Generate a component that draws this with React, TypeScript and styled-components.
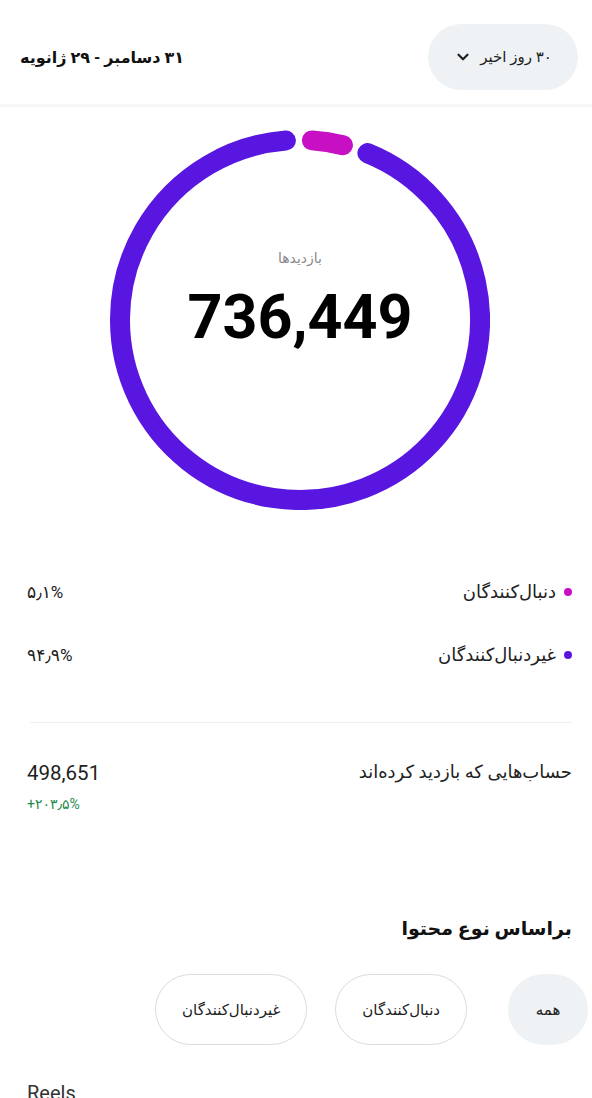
import styled, { createGlobalStyle } from "styled-components";
import { ChevronDown } from "lucide-react";

const GlobalStyle = createGlobalStyle`
  html, body {
    margin: 0;
    padding: 0;
    background: #ffffff;
  }
  body {
    direction: rtl;
    font-family: Roboto, "DejaVu Sans", sans-serif;
    color: #1c1c1c;
  }
  * {
    box-sizing: border-box;
  }
`;

const PURPLE = "#5816e0";
const PINK = "#c70fc4";

const Page = styled.div`
  width: 592px;
  height: 1098px;
  overflow: hidden;
`;

const Header = styled.header`
  height: 107px;
  border-bottom: 3px solid #f6f6f6;
  display: flex;
  align-items: center;
  justify-content: space-between;
  padding: 10px 14px 0 20px;
`;

const RangeButton = styled.button`
  height: 66px;
  width: 150px;
  border: none;
  border-radius: 33px;
  background: #eff2f5;
  display: flex;
  align-items: center;
  justify-content: center;
  gap: 8px;
  font-family: inherit;
  font-size: 15px;
  color: #222;
  direction: rtl;
`;

const DateLabel = styled.div`
  font-size: 16px;
  font-weight: bold;
  color: #111;
`;

const DonutWrap = styled.section`
  display: flex;
  justify-content: center;
  padding: 23px 0 0 8px;
`;

const DonutStack = styled.div`
  display: grid;
  width: 380px;
  height: 380px;
  & > * {
    grid-area: 1 / 1;
  }
`;

const DonutCenter = styled.div`
  display: flex;
  flex-direction: column;
  align-items: center;
  padding-top: 116px;
`;

const CenterCaption = styled.div`
  font-size: 14px;
  color: #8a8a8a;
  line-height: 24px;
`;

const CenterValue = styled.div`
  font-family: Roboto, "Liberation Sans", sans-serif;
  font-size: 61px;
  font-weight: bold;
  color: #000;
  line-height: 70px;
  margin-top: 12px;
  direction: ltr;
`;

const Legend = styled.section`
  margin-top: 50px;
  padding: 0 20px 0 27px;
`;

const LegendRow = styled.div`
  height: 63px;
  display: flex;
  align-items: center;
  justify-content: space-between;
`;

const LegendLabel = styled.div`
  display: flex;
  align-items: center;
  gap: 8px;
  font-size: 18px;
  color: #222;
`;

const Dot = styled.span<{ $color: string }>`
  width: 8px;
  height: 8px;
  border-radius: 50%;
  background: ${(p) => p.$color};
`;

const Percent = styled.div`
  font-size: 17px;
  color: #222;
`;

const Divider = styled.hr`
  margin: 36px 20px 0 30px;
  border: none;
  border-top: 1px solid #eeeeee;
`;

const StatRow = styled.section`
  margin-top: 37px;
  padding: 0 20px 0 27px;
  display: flex;
  justify-content: space-between;
  align-items: flex-start;
`;

const StatLabel = styled.div`
  font-size: 18px;
  line-height: 24px;
  color: #222;
`;

const StatValues = styled.div`
  display: flex;
  flex-direction: column;
  align-items: flex-start;
  direction: ltr;
`;

const StatNumber = styled.div`
  font-family: Roboto, sans-serif;
  font-size: 20.5px;
  line-height: 26px;
  color: #222;
`;

const StatChange = styled.div`
  margin-top: 8px;
  font-size: 14px;
  line-height: 20px;
  color: #1e8a4c;
`;

const SectionTitle = styled.h2`
  margin: 100px 20px 0 0;
  font-size: 19px;
  line-height: 30px;
  font-weight: bold;
  color: #111;
`;

const ChipRow = styled.div`
  margin-top: 30px;
  padding-right: 4px;
  display: flex;
  gap: 28px;
`;

const Chip = styled.button<{ $active?: boolean }>`
  height: 71px;
  padding: 0 ${(p) => (p.$active ? "24px" : "26px")};
  min-width: ${(p) => (p.$active ? "80px" : "auto")};
  margin-left: ${(p) => (p.$active ? "13px" : "0")};
  border-radius: 36px;
  border: ${(p) => (p.$active ? "none" : "1.5px solid #dcdcdc")};
  background: ${(p) => (p.$active ? "#eff2f5" : "#fff")};
  font-family: inherit;
  font-size: 15px;
  color: #222;
  direction: rtl;
`;

const ReelsTitle = styled.div`
  margin-top: 36px;
  padding-left: 27px;
  direction: ltr;
  text-align: left;
  font-family: Roboto, sans-serif;
  font-size: 20px;
  color: #333;
`;

const CX = 190;
const CY = 190;
const R = 180;

const point = (deg: number) => {
  const a = (deg * Math.PI) / 180;
  return [CX + R * Math.sin(a), CY - R * Math.cos(a)];
};

const arc = (from: number, to: number) => {
  const [x1, y1] = point(from);
  const [x2, y2] = point(to);
  const large = to - from > 180 ? 1 : 0;
  return `M ${x1} ${y1} A ${R} ${R} 0 ${large} 1 ${x2} ${y2}`;
};

const Donut = () => (
  <svg width="380" height="380" viewBox="0 0 380 380">
    <path d={arc(22, 355.5)} fill="none" stroke={PURPLE} strokeWidth="20" strokeLinecap="round" />
    <path d={arc(3.8, 13.8)} fill="none" stroke={PINK} strokeWidth="20" strokeLinecap="round" />
  </svg>
);

const legend = [
  { label: "دنبال‌کنندگان", value: "۵٫۱%", color: PINK },
  { label: "غیردنبال‌کنندگان", value: "۹۴٫۹%", color: PURPLE },
];

const chips = ["همه", "دنبال‌کنندگان", "غیردنبال‌کنندگان"];

const App = () => (
  <Page>
    <GlobalStyle />
    <Header>
      <RangeButton>
        <span>۳۰ روز اخیر</span>
        <ChevronDown size={18} strokeWidth={3} />
      </RangeButton>
      <DateLabel>۳۱ دسامبر - ۲۹ ژانویه</DateLabel>
    </Header>

    <DonutWrap>
      <DonutStack>
        <Donut />
        <DonutCenter>
          <CenterCaption>بازدیدها</CenterCaption>
          <CenterValue>736,449</CenterValue>
        </DonutCenter>
      </DonutStack>
    </DonutWrap>

    <Legend>
      {legend.map((item) => (
        <LegendRow key={item.label}>
          <LegendLabel>
            <Dot $color={item.color} />
            {item.label}
          </LegendLabel>
          <Percent>{item.value}</Percent>
        </LegendRow>
      ))}
    </Legend>

    <Divider />

    <StatRow>
      <StatLabel>حساب‌هایی که بازدید کرده‌اند</StatLabel>
      <StatValues>
        <StatNumber>498,651</StatNumber>
        <StatChange>+۲۰۳٫۵%</StatChange>
      </StatValues>
    </StatRow>

    <SectionTitle>براساس نوع محتوا</SectionTitle>

    <ChipRow>
      {chips.map((c, i) => (
        <Chip key={c} $active={i === 0}>
          {c}
        </Chip>
      ))}
    </ChipRow>

    <ReelsTitle>Reels</ReelsTitle>
  </Page>
);

export default App;
